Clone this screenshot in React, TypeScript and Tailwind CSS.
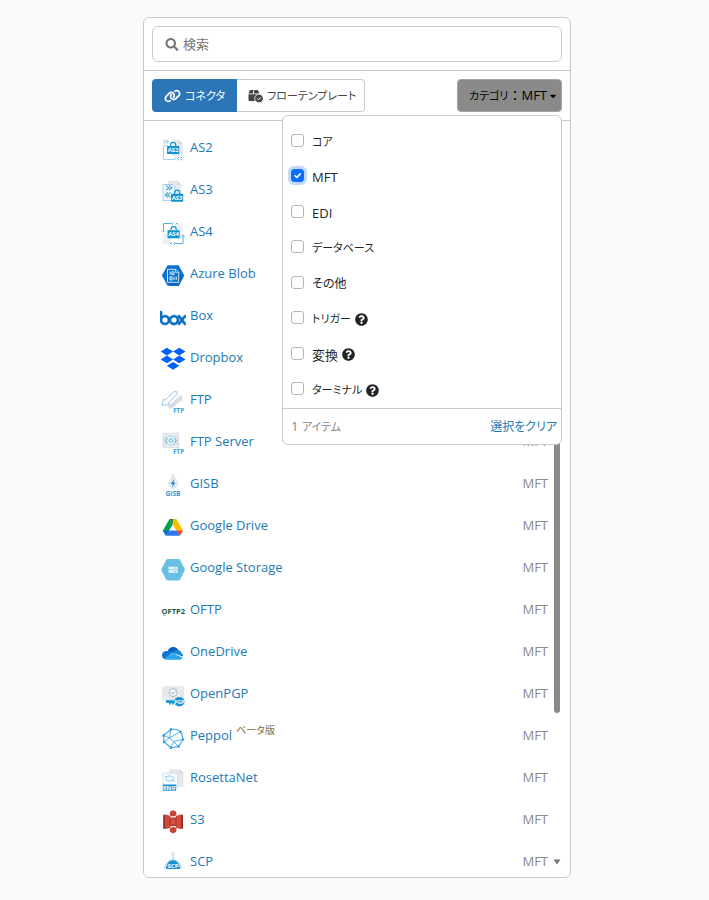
import React, { useState } from "react";
import { FaCaretDown, FaQuestionCircle, FaSearch } from "react-icons/fa";
import { FaLink } from "react-icons/fa6";
import { SiBox } from "react-icons/si";

const iconText = { fontFamily: '"Open Sans", "Noto Sans", sans-serif', fontWeight: 700 };

function Icon({ children }: { children: React.ReactNode }) {
  return (
    <svg viewBox="0 0 26 26" className="mt-[6px] h-[26px] w-[26px] shrink-0" fill="none" aria-hidden="true">
      {children}
    </svg>
  );
}

function Lock({ x, y, label }: { x: number; y: number; label: string }) {
  return (
    <g transform={`translate(${x} ${y})`}>
      <path d="M3.500 5V3.400a2.600 2.600 0 0 1 5.200 0V5" stroke="#1593d2" strokeWidth="1.200" />
      <rect x="0" y="4.400" width="12.200" height="8" rx=".6" fill="#1593d2" />
      <text x="6.100" y="10.700" fontSize="6" fill="#fff" textAnchor="middle" style={iconText}>
        {label}
      </text>
    </g>
  );
}

const icons: Record<string, React.ReactNode> = {
  AS2: (
    <Icon>
      <path d="M12 3h7l4 4v12H12z" fill="#e6eaee" />
      <path d="M19 3v4h4" fill="#d2dae1" />
      <path d="M7.500 8.500h-4v14H15V20" stroke="#8cc9ec" strokeWidth=".8" />
      <path d="m3.600 2.900 2 1.700-2 1.700M6.400 2.900l2 1.700-2 1.700" stroke="#4fb0e2" strokeWidth=".9" />
      <path d="m19.400 19.800-2 1.700 2 1.700M22.300 19.800l-2 1.700 2 1.700" stroke="#4fb0e2" strokeWidth=".9" />
      <Lock x={7} y={4.6} label="AS2" />
    </Icon>
  ),
  AS3: (
    <Icon>
      <path d="M8 1.500h9l4.500 4.500V18H8z" fill="#e6eaee" />
      <path d="M17 1.500V6h4.500" fill="#d2dae1" />
      <path d="M3 5.500h9.500l2.500 2.500v13.500H3z" fill="#f7fbfe" stroke="#8cc9ec" strokeWidth=".8" />
      <path d="m6 6.400 3 2.400-3 2.400M9 6.400l3 2.400-3 2.400M10.500 13.500l-3 2.400 3 2.400M7.800 13.500l-2.600 2.400 2.600 2.400" stroke="#3ca5dc" strokeWidth="1.100" />
      <Lock x={11} y={10.3} label="AS3" />
    </Icon>
  ),
  AS4: (
    <Icon>
      <path d="M15 2.500h5l3 3V18h-8z" fill="#eceff2" />
      <path d="M3 13h8v10H3z" fill="#edf0f3" />
      <path d="M3.500 10V2.500h8M16 2.500h1.500M23 14v8.500h-8M10 22.500h2" stroke="#54b2e3" strokeWidth="1" />
      <path d="m11.500 1 1.800 1.500L11.500 4M15 21l-1.800 1.500L15 24M2 9.500 3.500 11 5 9.500M21.500 15.500 23 14l1.500 1.500" stroke="#54b2e3" strokeWidth=".9" />
      <Lock x={7.5} y={4.8} label="AS4" />
    </Icon>
  ),
  "Azure Blob": (
    <Icon>
      <path d="M7.500 2.300h11.200l5.600 10.200-5.600 10.200H7.500L1.900 12.500z" fill="#0a74cf" />
      <path d="m18.500 9 4.500 5.500-4.300 8.200H10L7.500 19.500z" fill="#0866ba" />
      <path d="M7.500 6.400h8.200l3 3v9.900H7.500z" fill="#0a74cf" stroke="#cfe4f7" strokeWidth="1" />
      <path d="M15.500 6.400v3h3" stroke="#cfe4f7" strokeWidth=".8" />
      <path d="M10.200 8.500v3.200M12 8.800h2v2.900h-2zM10 13.800h2v3.200h-2zM14 13.600V17M16.200 13.600V17" stroke="#fff" strokeWidth=".9" />
    </Icon>
  ),
  Box: (
    <SiBox
      className="mt-[6px] h-[26px] w-[26px] shrink-0 stroke-[#0a6fc2] stroke-[0.7] text-[#0a6fc2]"
      aria-hidden="true"
    />
  ),
  Dropbox: (
    <Icon>
      <path
        d="m6.900.7 6.200 3.900-6.200 3.900L.7 4.600zM19.300.7l6.200 3.900-6.200 3.900-6.200-3.900zM6.900 8.500l6.200 3.900-6.200 3.900-6.200-3.900zM19.300 8.500l6.200 3.900-6.200 3.900-6.200-3.900zM13.100 14.900l6.200 3.900-6.200 3.900-6.200-3.900z"
        fill="#0061fe"
      />
    </Icon>
  ),
  FTP: (
    <Icon>
      <path d="m21.500 5.500 1 7-1.700-1-8.300 7.500-3 .7-2-2.200 9.500-8z" fill="#d9dee3" />
      <path d="m2 16.500 1.500-6.500 1.300 1.200L14 2.500l3 .3.300 2.500-9.300 9 1.300 1.200z" fill="#f9fcfe" stroke="#8ec5e6" strokeWidth=".9" />
      <text x="18.600" y="23.800" fontSize="6.200" fill="#3aa0d8" textAnchor="middle" style={iconText}>FTP</text>
    </Icon>
  ),
  "FTP Server": (
    <Icon>
      <rect x="2.700" y="1.800" width="16.400" height="15.200" rx="1" fill="#dbe1e6" />
      <path d="M4 4h14M4 15h14" stroke="#f7f9fa" strokeWidth="1" />
      <circle cx="10.900" cy="9.500" r="4.600" fill="#eef6fb" stroke="#91c9e9" strokeWidth=".8" />
      <circle cx="10.900" cy="9.500" r="1.800" stroke="#49acdf" strokeWidth=".9" />
      <path d="m7.400 7.500-2 2 2 2M14.400 7.500l2 2-2 2" stroke="#49acdf" strokeWidth=".8" />
      <text x="18.600" y="22.600" fontSize="6.200" fill="#3aa0d8" textAnchor="middle" style={iconText}>FTP</text>
    </Icon>
  ),
  GISB: (
    <Icon>
      <path d="M13 1c1 3.500 4.300 6.300 4.300 10a4.300 4.300 0 0 1-8.600 0C8.700 7.300 12 4.500 13 1z" fill="#eceff1" stroke="#d0d6db" strokeWidth=".7" />
      <path d="M14.400 5.500 10.600 11h2.100l-.8 3.700 3.700-5.300h-2.100z" fill="#1593d2" />
      <text x="13" y="22.700" fontSize="6.600" fill="#2c9ad5" textAnchor="middle" style={iconText}>GISB</text>
    </Icon>
  ),
  "Google Drive": (
    <Icon>
      <path d="M9.500 4 2.900 15.400 6 20.800 12.800 9.200z" fill="#00a24b" />
      <path d="M9.500 4h6.800l-3.500 5.500z" fill="#188038" />
      <path d="M16.300 4h-3.500v5.500l3.500 6h6.800z" fill="#fbbc04" />
      <path d="M9.700 15.400h6.900l3.200 5.400H6z" fill="#2f76f0" />
      <path d="M2.900 15.400h6.800L6 20.800z" fill="#1967d2" />
      <path d="M16.400 15.400h6.700l-3.300 5.400z" fill="#ea4335" />
    </Icon>
  ),
  "Google Storage": (
    <Icon>
      <path d="M7.500 2h11.200q.8 0 1.200.8l4.800 9.100q.4.800 0 1.600l-4.800 9.200q-.4.800-1.200.8H7.500q-.8 0-1.200-.8l-4.800-9.200q-.4-.8 0-1.600l4.800-9.100Q6.700 2 7.500 2z" fill="#67bfe4" />
      <path d="M8.600 9.800h9.200v2.600H8.600zM8.600 13.200h9.200v2.600H8.600z" fill="#edf8fc" />
      <path d="M13.500 11.100h3M13.500 14.500h3" stroke="#67bfe4" strokeWidth=".6" />
    </Icon>
  ),
  OFTP: (
    <Icon>
      <text x="13.300" y="15.400" fontSize="7.500" fill="#175a45" textAnchor="middle" style={iconText}>OFTP2</text>
      <path d="M3 16.300h2.500" stroke="#4fa37b" strokeWidth=".8" />
    </Icon>
  ),
  OneDrive: (
    <Icon>
      <path d="M7.800 10.200A5.700 5.700 0 0 1 18.300 9l-2.800 4z" fill="#0f5fbd" />
      <path d="M7.400 10.100c2-.3 3.300.4 5 1.500L5 18.300a4.100 4.100 0 0 1 2.400-8.200z" fill="#1278cf" />
      <path d="M12.400 11.600c1.700-1.800 3.200-2.700 5.400-2.600 2 .2 3.300 1.400 3.500 3 1.500.8 2 2 1.700 3.700z" fill="#1688da" />
      <path d="M4.300 17.800 12.600 12l9.900 4.800c-.7 1.500-1.800 2-3.300 2H6.500c-.9 0-1.600-.3-2.200-1z" fill="#2aa5ea" />
    </Icon>
  ),
  OpenPGP: (
    <Icon>
      <rect x="2.300" y="3.200" width="21.800" height="14.500" fill="#e4e8ec" />
      <path d="m2.500 3.500 10.700 8.600L24 3.500M2.500 17.500l8-7.300M24 17.500l-8-7.300" stroke="#f9fafb" strokeWidth=".8" />
      <circle cx="13.100" cy="9.600" r="4" fill="#f4f7f9" stroke="#8e9eab" strokeWidth=".7" />
      <path d="m11.200 9.500 1.500 1.500 2.600-2.800" stroke="#78a8c4" strokeWidth=".9" />
      <path d="M5.800 17.300h9.200v2.800h-1.200v1.500h-1.700v-1.500h-1v1.500H9.300v-1.500H6.400z" fill="#1593d2" />
      <ellipse cx="19.300" cy="18.800" rx="5.300" ry="4.700" fill="#1593d2" />
      <text x="19.300" y="20.600" fontSize="5" fill="#fff" textAnchor="middle" style={iconText}>PGP</text>
    </Icon>
  ),
  Peppol: (
    <Icon>
      <path d="M11 4.500c5-1 9 .5 11 5l1 5-4.500 7-7.500 1.200L4 17l-.5-6.500z" stroke="#36a3e0" strokeWidth="1.100" />
      <path d="m11 4.500-1.500 8.500L4 17M9.500 13l4 3.500 9.500-2M13.500 16.500 11 22.700M9.500 13 20 6.800M13.500 16.500l5 5M3.500 10.500l6 2.500" stroke="#53b2e6" strokeWidth="1" />
      <g fill="#2b9bdc">
        <circle cx="11" cy="4.200" r="1.300" />
        <circle cx="20.500" cy="6.800" r="1.300" />
        <circle cx="23" cy="14.500" r="1.300" />
        <circle cx="18.500" cy="21.500" r="1.300" />
        <circle cx="11" cy="22.700" r="1.300" />
        <circle cx="4" cy="17" r="1.300" />
        <circle cx="3.500" cy="10.500" r="1.300" />
      </g>
    </Icon>
  ),
  RosettaNet: (
    <Icon>
      <path d="M9 2.300h10.500l4 4V20H9z" fill="#e4e8ec" />
      <path d="M19.500 2.300v4h4" fill="#cfd7dd" />
      <path d="M3 6h12.500l2 2V19H3z" fill="#f8fbfd" stroke="#bfd9e8" strokeWidth=".7" />
      <ellipse cx="9.800" cy="11.500" rx="3.800" ry="2.600" stroke="#7fc0e4" strokeWidth=".8" />
      <path d="m5 9 1.800 2M12.600 13l2 2" stroke="#7fc0e4" strokeWidth=".8" />
      <rect x="2.800" y="17.500" width="13.400" height="6.200" fill="#1593d2" />
      <text x="9.500" y="22.700" fontSize="5.600" fill="#fff" textAnchor="middle" style={iconText}>RNIF</text>
    </Icon>
  ),
  S3: (
    <Icon>
      <path d="m3.200 5.500 2.300.8v13l-2.300.7z" fill="#8c3123" />
      <path d="m5 5.300 5.500 1.600v11.800L5 20.300z" fill="#d0493a" />
      <path d="m23 5.500-2.300.8v13l2.300.7z" fill="#8c3123" />
      <path d="m21.300 5.300-5.500 1.600v11.800l5.500 1.600z" fill="#d0493a" />
      <path d="m13.100 1.200 3.200 1.600v3.700l-3.200 1-3.200-1V2.800z" fill="#c44435" />
      <path d="m13.100 24.400 3.200-1.600v-3.700l-3.200-1-3.200 1v3.700z" fill="#c44435" />
      <path d="M9.500 8.500h7.300v8.700H9.500z" fill="#b93d2e" />
      <path d="M11.300 10.300h3.600v5h-3.600z" fill="#d85646" />
    </Icon>
  ),
  SCP: (
    <Icon>
      <circle cx="13" cy="3" r="1.500" stroke="#c4d3dd" strokeWidth=".8" />
      <path d="M13 4.500V9" stroke="#86c5e8" strokeWidth=".9" />
      <path d="M4.700 17.500a8.400 10 0 0 1 16.600 0" stroke="#8ccaec" strokeWidth=".9" />
      <path d="M5.800 18.500C6.500 12.500 9 9.200 13 9.200s6.500 3.300 7.200 9.300z" fill="#1593d2" />
      <text x="13" y="16.700" fontSize="6" fill="#fff" textAnchor="middle" style={iconText}>SCP</text>
    </Icon>
  ),
};

const connectors = [
  "AS2", "AS3", "AS4", "Azure Blob", "Box", "Dropbox", "FTP", "FTP Server", "GISB",
  "Google Drive", "Google Storage", "OFTP", "OneDrive", "OpenPGP", "Peppol",
  "RosettaNet", "S3", "SCP",
];

const categories = [
  { name: "コア", size: "text-[11px]" },
  { name: "MFT", size: "text-[13px]" },
  { name: "EDI", size: "text-[13px]" },
  { name: "データベース", size: "text-[11px]" },
  { name: "その他", size: "text-xs" },
  { name: "トリガー", size: "text-[11px]", help: true },
  { name: "変換", size: "text-[13px]", help: true },
  { name: "ターミナル", size: "text-[11px]", help: true },
];

function PackageIcon() {
  return (
    <svg viewBox="0 0 15 14" className="h-[14px] w-[15px] shrink-0" fill="none" aria-hidden="true">
      <path d="M2 1h3.500L5 4.500H.5zM6.300 1h3.500L11.500 4.500H5.800zM.5 5.300H12V12H1.500a1 1 0 0 1-1-1z" fill="#444" />
      <circle cx="11" cy="9.500" r="4.300" fill="#444" stroke="#fff" strokeWidth=".8" />
      <path d="m9.200 9.500 1.400 1.400 2.300-2.600" stroke="#fff" strokeWidth="1" />
    </svg>
  );
}

function CategoryMenu({ selected, onChange }: { selected: string[]; onChange: (names: string[]) => void }) {
  const toggle = (name: string) =>
    onChange(selected.includes(name) ? selected.filter((n) => n !== name) : [...selected, name]);

  return (
    <div className="absolute top-9 right-0 z-10 w-[280px] rounded-md border border-[#c8cbcd] bg-white">
      <div className="flex h-[292px] flex-col pt-2">
        {categories.map(({ name, size, help }) => (
          <label key={name} className="flex flex-1 items-center gap-2 pl-2 text-[#212529]">
            <span className="relative mb-[3px] flex">
              <input
                type="checkbox"
                checked={selected.includes(name)}
                onChange={() => toggle(name)}
                className="h-[13px] w-[13px] appearance-none rounded-[3px] border border-[#b4b7ba] bg-white checked:border-[#0d6efd] checked:bg-[#0d6efd] checked:ring-3 checked:ring-[#c2d9fd]"
              />
              {selected.includes(name) && (
                <svg viewBox="0 0 13 13" className="pointer-events-none absolute inset-0" fill="none" aria-hidden="true">
                  <path d="m4 6.700 1.800 1.800 3.400-3.600" stroke="#fff" strokeWidth="1.600" strokeLinecap="round" strokeLinejoin="round" />
                </svg>
              )}
            </span>
            <span className="flex items-center gap-1">
              <span className={size}>{name}</span>
              {help && <FaQuestionCircle className="h-[13px] w-[13px]" aria-hidden="true" />}
            </span>
          </label>
        ))}
      </div>
      <div className="flex h-9 items-center justify-between border-t border-[#c8cbcd] pr-1 pl-2">
        <span className="text-[#8a8a8a]">
          {selected.length} <span className="text-[11px]">アイテム</span>
        </span>
        <button type="button" onClick={() => onChange([])} className="text-xs text-[#2379b5]">
          選択をクリア
        </button>
      </div>
    </div>
  );
}

export default function App() {
  const [selected, setSelected] = useState<string[]>(["MFT"]);

  return (
    <div className="min-h-screen bg-[#fafafa] pt-[17px] pr-[138px] pb-[22px] pl-[143px] font-['Open_Sans','Noto_Sans_CJK_JP',sans-serif] text-[13px] leading-5 [font-feature-settings:'palt']">
      <main className="rounded-md border border-[#c8cbcd] bg-white">
        <div className="border-b border-[#c8cbcd] p-2">
          <label className="flex h-9 items-center gap-1 rounded-md border border-[#c8cbcd] px-3">
            <FaSearch className="h-[13px] w-[14px] shrink-0 text-[#757575]" aria-hidden="true" />
            <input
              type="text"
              aria-label="検索"
              placeholder="検索"
              className="w-full bg-transparent outline-none placeholder:text-[#757575]"
            />
          </label>
        </div>

        <div className="flex items-center justify-between border-b border-[#c8cbcd] p-2">
          <div className="flex h-[33px] text-[11px] whitespace-nowrap">
            <button type="button" className="flex items-center justify-center gap-1 rounded-l-[4px] bg-[#2c75b6] px-3 text-white">
              <FaLink className="h-[14px] w-[17px]" aria-hidden="true" />
              コネクタ
            </button>
            <button type="button" className="flex items-center justify-center gap-1 rounded-r-[4px] border border-l-0 border-[#c8cbcd] bg-white pr-2 pl-[11px] text-[#444]">
              <PackageIcon />
              フローテンプレート
            </button>
          </div>
          <div className="relative">
            <button type="button" aria-expanded="true" className="flex h-[33px] items-center gap-[2px] rounded-[4px] border border-[#a5a5a5] bg-[#8a8a8a] pr-1 pl-[11px] text-black">
              <span>
                <span className="text-[11px]">カテゴリ</span>
                <span className="[font-feature-settings:normal]">：</span>
                {selected.join("、")}
              </span>
              <FaCaretDown className="h-[10px] w-2" aria-hidden="true" />
            </button>
            <CategoryMenu selected={selected} onChange={setSelected} />
          </div>
        </div>

        <div className="mb-2 flex h-[748px] overflow-hidden pr-[10px] pl-4">
          <ul className="flex-1 pt-[5px]">
            {connectors.map((name) => (
              <li key={name} className="flex h-[42px] items-center justify-between">
                <a href="#" className="flex h-full items-center gap-1 text-[#2379b5]">
                  {icons[name]}
                  <span>{name}</span>
                  {name === "Peppol" && <sup className="text-[10px] leading-3 text-[#8a6d3b]">ベータ版</sup>}
                </a>
                <span className="text-[#8a8a8a]">MFT</span>
              </li>
            ))}
          </ul>
          <div className="ml-[6px] flex w-[6px] flex-col items-center justify-between pt-5 pb-1">
            <div className="h-[572px] w-full rounded-full bg-[#8a8a8a]" />
            <svg viewBox="0 0 8 6" className="h-[6px] w-2 shrink-0" fill="#777" aria-hidden="true">
              <path d="M.5.500h7L4 5.500z" />
            </svg>
          </div>
        </div>
      </main>
    </div>
  );
}
